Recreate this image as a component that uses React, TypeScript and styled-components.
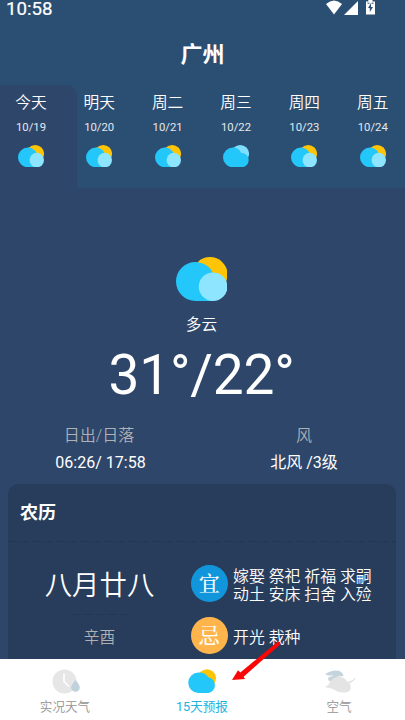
import React from 'react';
import styled, { createGlobalStyle } from 'styled-components';

const Global = createGlobalStyle`
  * { box-sizing: border-box; }
  body { margin: 0; background: #2b4f72; }
`;

const Screen = styled.div`
  position: relative;
  width: 405px;
  height: 720px;
  overflow: hidden;
  display: flex;
  flex-direction: column;
  background: #2b4f72;
  color: #fff;
  font-family: Roboto, 'Noto Sans CJK SC', sans-serif;
  white-space: nowrap;
`;

const StatusBar = styled.div`
  height: 18px;
  flex: none;
  display: flex;
  justify-content: space-between;
  padding: 0 29px 0 6px;
`;

const Clock = styled.span`
  font-size: 18.7px;
  font-weight: 400;
  line-height: 18px;
  -webkit-text-stroke: 0.2px #fff;
`;

const Title = styled.h1`
  margin: 0;
  height: 67px;
  flex: none;
  padding-top: 21px;
  font-size: 22px;
  line-height: 32px;
  font-weight: 700;
  text-align: center;
`;

const Days = styled.div`
  display: flex;
  flex: none;
  height: 103px;
  width: 420px;
`;

const Day = styled.div<{ $active?: boolean }>`
  flex: none;
  display: flex;
  flex-direction: column;
  align-items: center;
  width: ${(p) => (p.$active ? 77 : 68.4)}px;
  padding: 6px ${(p) => (p.$active ? 15 : 0)}px 0 0;
  margin-right: ${(p) => (p.$active ? -12 : 0)}px;
  border-top-right-radius: ${(p) => (p.$active ? 11 : 0)}px;
  background: ${(p) => (p.$active ? '#2e466a' : 'transparent')};
`;

const DayName = styled.span`
  font-size: 15.7px;
  line-height: 24px;
  font-weight: 350;
`;

const DayDate = styled.span`
  margin: 4px 0 9px;
  font-size: 11.3px;
  line-height: 17px;
  color: #e3e9ef;
`;

const Panel = styled.main`
  flex: 1;
  min-height: 0;
  overflow: hidden;
  display: flex;
  flex-direction: column;
  align-items: center;
  padding: 69px 2px 0 0;
  background: #2e466a;

  > svg { flex: none; }
`;

const Condition = styled.div`
  flex: none;
  margin-top: 12px;
  font-size: 15.7px;
  line-height: 24px;
  font-weight: 350;
`;

const Temperature = styled.div`
  flex: none;
  height: 66px;
  margin-top: 5px;
  font-size: 55px;
  line-height: 66px;
  letter-spacing: -0.2px;
`;

const Facts = styled.div`
  flex: none;
  width: 410px;
  display: flex;
  margin-top: 14px;
`;

const Fact = styled.div`
  flex: 1;
  text-align: center;
  font-size: 16px;
`;

const FactLabel = styled.div`
  color: #aeb1b5;
  line-height: 28px;
  font-weight: 350;
`;

const FactValue = styled.div<{ $shift?: number }>`
  padding-left: ${(p) => p.$shift ?? 0}px;
  line-height: 26px;
`;

const Card = styled.section`
  flex: none;
  align-self: flex-start;
  width: 388px;
  height: 190px;
  margin: 8px 0 0 8px;
  border-radius: 10px;
  background: #283d5b;
`;

const CardTitle = styled.h2`
  margin: 0;
  height: 57px;
  padding: 14px 0 0 12px;
  font-size: 18px;
  line-height: 30px;
  font-weight: 700;
`;

const Dash = styled.div<{ $width: number }>`
  width: ${(p) => p.$width}px;
  height: 1px;
  background: repeating-linear-gradient(90deg, #233752 0 9px, transparent 9px 12px);
`;

const CardBody = styled.div`
  display: flex;
`;

const Lunar = styled.div`
  width: 183px;
  display: flex;
  flex-direction: column;
  align-items: center;
  padding-top: 23px;
`;

const LunarDate = styled.div`
  height: 49px;
  font-size: 27.4px;
  line-height: 42px;
  font-weight: 350;
`;

const LunarYear = styled.div`
  margin-top: 10px;
  font-size: 15.7px;
  line-height: 25px;
  font-weight: 350;
  color: #aeb1b5;
`;

const Almanac = styled.div`
  display: flex;
  flex-direction: column;
  gap: 15px;
  padding-top: 23px;
`;

const AlmanacRow = styled.div`
  height: 37px;
  display: flex;
  align-items: center;
  gap: 5.5px;
`;

const AlmanacText = styled.div`
  padding-top: 5px;
  font-size: 15.9px;
  line-height: 18.4px;
  font-weight: 350;
`;

const Seal = styled.span<{ $color: string }>`
  width: 36.5px;
  height: 37px;
  border-radius: 50%;
  display: flex;
  align-items: center;
  justify-content: center;
  background: ${(p) => p.$color};
  font-family: 'Noto Serif CJK SC', 'Noto Sans CJK SC', serif;
  font-size: 21px;
  font-weight: 500;
  line-height: 30px;
  padding-bottom: 4px;
`;

const Nav = styled.nav`
  flex: none;
  height: 61px;
  width: 411px;
  margin-left: -3.5px;
  box-shadow: 6px 0 #fff;
  display: flex;
  background: #fff;
`;

const NavItem = styled.div<{ $active?: boolean }>`
  flex: 1;
  display: flex;
  flex-direction: column;
  align-items: center;
  padding-top: 9px;
  font-size: 12.6px;
  line-height: 20px;
  font-weight: ${(p) => (p.$active ? 400 : 350)};
  color: ${(p) => (p.$active ? '#20b4e0' : '#949494')};

  svg { margin-bottom: 3px; }
`;

const Arrow = styled.svg`
  position: absolute;
  left: 230px;
  top: 638px;
`;

type WeatherKind = 'partly' | 'cloudy';

function WeatherIcon({ kind = 'partly', width = 26 }: { kind?: WeatherKind; width?: number }) {
  return (
    <svg width={width} height={(width * 44) / 51.4} viewBox="0 0 51.4 44">
      <circle cx="34" cy="17.5" r="17.5" fill={kind === 'cloudy' ? '#80deff' : '#ffc505'} />
      {kind === 'cloudy' ? (
        <path d="M19.5 5C27 5 33 9 36 15.6A14.2 14.2 0 0 1 37.2 44H19.5A19.5 19.5 0 0 1 19.5 5Z" fill="#23c7fa" />
      ) : (
        <>
          <path d="M19.5 5A19.5 19.5 0 0 1 37 33V44H19.5A19.5 19.5 0 0 1 19.5 5Z" fill="#23c7fa" />
          <circle cx="37.1" cy="29.7" r="14.3" fill="#8de5ff" />
        </>
      )}
    </svg>
  );
}

const days: { name: string; date: string; kind?: WeatherKind }[] = [
  { name: '今天', date: '10/19' },
  { name: '明天', date: '10/20' },
  { name: '周二', date: '10/21' },
  { name: '周三', date: '10/22', kind: 'cloudy' },
  { name: '周四', date: '10/23' },
  { name: '周五', date: '10/24' },
];

export default function App() {
  return (
    <>
      <Global />
      <Screen>
        <StatusBar>
          <Clock>10:58</Clock>
          <svg width="50" height="16" viewBox="0 0 50 16" fill="#fff">
            <path d="M0 4Q8-3 16 4L8 14.5Z" />
            <path d="M18 15L32 1V15Z" />
            <path d="M42.3 0H46.5V1.5H49V14.5H40V1.5H42.3Z" />
            <path d="M41.5 3.2H43.5M45.5 3.2H47.5" stroke="#2b4f72" />
            <path d="M45 3V7H47L43.8 12V8H42Z" fill="#2b4f72" />
          </svg>
        </StatusBar>
        <Title>广州</Title>
        <Days>
          {days.map((d, i) => (
            <Day key={d.date} $active={i === 0}>
              <DayName>{d.name}</DayName>
              <DayDate>{d.date}</DayDate>
              <WeatherIcon kind={d.kind} />
            </Day>
          ))}
        </Days>
        <Panel>
          <WeatherIcon width={51.4} />
          <Condition>多云</Condition>
          <Temperature>31°/22°</Temperature>
          <Facts>
            <Fact>
              <FactLabel>日出/日落</FactLabel>
              <FactValue $shift={3}>06:26/ 17:58</FactValue>
            </Fact>
            <Fact>
              <FactLabel>风</FactLabel>
              <FactValue>北风 /3级</FactValue>
            </Fact>
          </Facts>
          <Card>
            <CardTitle>农历</CardTitle>
            <Dash $width={388} />
            <CardBody>
              <Lunar>
                <LunarDate>八月廿八</LunarDate>
                <Dash $width={56} />
                <LunarYear>辛酉</LunarYear>
              </Lunar>
              <Almanac>
                <AlmanacRow>
                  <Seal $color="#1296db">宜</Seal>
                  <AlmanacText>
                    嫁娶 祭祀 祈福 求嗣
                    <br />
                    动土 安床 扫舍 入殓
                  </AlmanacText>
                </AlmanacRow>
                <AlmanacRow>
                  <Seal $color="#ffb54c">忌</Seal>
                  <AlmanacText>开光 栽种</AlmanacText>
                </AlmanacRow>
              </Almanac>
            </CardBody>
          </Card>
        </Panel>
        <Nav>
          <NavItem>
            <svg width="30" height="26" viewBox="0 0 30 26">
              <circle cx="14.5" cy="13.4" r="12" fill="#e6e6e6" />
              <path d="M14 5.5V13.5L19 18.5" fill="none" stroke="#fff" strokeWidth="1.6" />
              <path d="M25.5 12Q29.8 17 29.8 19.5A4.3 4.3 0 0 1 21.2 19.5Q21.2 17 25.5 12Z" fill="#bfd2db" />
            </svg>
            实况天气
          </NavItem>
          <NavItem $active>
            <svg width="30" height="26" viewBox="0 0 30 26">
              <circle cx="20" cy="10.2" r="9" fill="#ffc505" />
              <path d="M11.5 4.5Q18 4 21.5 9.3A8 8 0 0 1 21.5 25H11.5A10.2 10.2 0 0 1 11.5 4.5Z" fill="#23c7fa" />
            </svg>
            15天预报
          </NavItem>
          <NavItem>
            <svg width="34" height="26" viewBox="0 0 34 26">
              <path d="M3 6.3Q11 1 18 3.2Q21 4.5 21.5 8L16 8.5L11 12L8 13.5Q5.5 12 6.2 9.5L12 7.5H6.5Q4.5 6.5 3 6.3Z" fill="#c5d4dc" />
              <path d="M3 19.3Q7 17 9 13Q13 7.5 20 9.3Q24 10.5 25.5 14Q31 12.5 34 9.3Q32.5 13.5 27.5 15.3Q31 21.5 25.5 24Q18 26 12 21.5Q8 19.5 3 19.3Z" fill="#e4e4e4" />
            </svg>
            空气
          </NavItem>
        </Nav>
        <Arrow width="56" height="46" viewBox="0 0 56 46" fill="#fb0606">
          <path d="M2 42L8 32.2L10.3 34.5L48 3.5Q50.5 3 50.5 6.2L13.6 38.7L15 41Z" />
        </Arrow>
      </Screen>
    </>
  );
}
